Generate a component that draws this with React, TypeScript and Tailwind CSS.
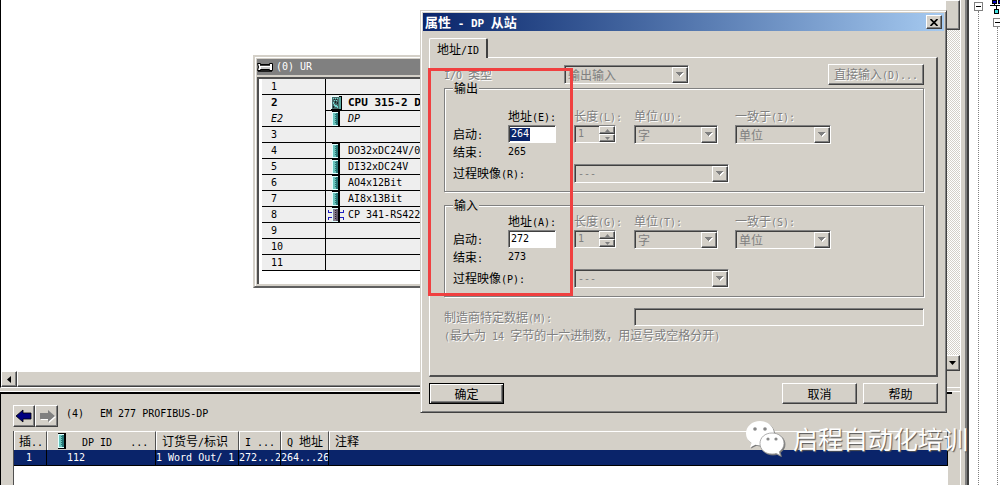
import React from "react";

const RAISED =
  "border border-t-white border-l-white border-r-[#404040] border-b-[#404040] shadow-[inset_-1px_-1px_0_#808080] bg-[#d4d0c8]";
const SUNKEN =
  "border border-t-[#808080] border-l-[#808080] border-r-white border-b-white shadow-[inset_1px_1px_0_#404040]";
const DISABLED = "text-[#808080] [text-shadow:1px_1px_0_#fff]";
const MONO = "font-['DejaVu_Sans_Mono',monospace] text-[10px]";

/* Latin runs are set in a half-width mono face beside full-width Chinese glyphs. */
function T({ children, bold = false }: { children: string; bold?: boolean }) {
  const runs = children.match(/[\x20-\x7e]+|[^\x20-\x7e]+/g) ?? [];
  const latin = bold
    ? "font-['DejaVu_Sans_Mono',monospace] text-[11px] leading-none"
    : "font-['DejaVu_Sans_Mono',monospace] text-[10px] leading-none";
  return (
    <span className="whitespace-pre">
      {runs.map((r, i) => (
        <span key={i} className={/^[\x20-\x7e]/.test(r) ? latin : "leading-none"}>{r}</span>
      ))}
    </span>
  );
}

function Select({ id, value, label, className }: { id: string; value: string; label?: string; className: string }) {
  return (
    <div className={`grid h-[19px] ${SUNKEN} ${className}`}>
      <select
        id={id}
        aria-label={label}
        disabled
        className="col-start-1 row-start-1 h-[17px] w-full appearance-none bg-transparent pl-[3px] text-xs leading-[17px] text-[#808080] opacity-100"
      >
        <option>{value}</option>
      </select>
      <span className={`pointer-events-none col-start-1 row-start-1 mt-px flex h-4 w-4 items-center justify-center justify-self-end ${RAISED}`}>
        <svg width="8" height="5" viewBox="0 0 8 5" shapeRendering="crispEdges">
          <path d="M1 1h7l-3.5 4z" fill="#fff" />
          <path d="M0 0h7l-3.5 4z" fill="#808080" />
        </svg>
      </span>
    </div>
  );
}

function Spinner({ id }: { id: string }) {
  return (
    <div className={`flex h-[18px] w-[42px] ${SUNKEN}`}>
      <input
        id={id}
        disabled
        defaultValue="1"
        className={`w-6 min-w-0 flex-1 bg-transparent pl-[3px] text-[#808080] ${MONO}`}
      />
      <div className="flex w-4 flex-col">
        <button disabled aria-label="增加" className={`flex flex-1 items-center justify-center ${RAISED}`}>
          <svg width="5" height="3" viewBox="0 0 5 3"><path d="M0 3h5l-2.5-3z" fill="#808080" /></svg>
        </button>
        <button disabled aria-label="减少" className={`flex flex-1 items-center justify-center ${RAISED}`}>
          <svg width="5" height="3" viewBox="0 0 5 3"><path d="M0 0h5l-2.5 3z" fill="#808080" /></svg>
        </button>
      </div>
    </div>
  );
}

interface GroupProps {
  id: string;
  title: string;
  keys: string[];
  start: string;
  end: string;
  selected?: boolean;
  className: string;
}

function AddressGroup({ id, title, keys, start, end, selected, className }: GroupProps) {
  return (
    <fieldset className={`min-w-0 border border-[#808080] pb-2 pl-2 shadow-[1px_1px_0_#fff,inset_1px_1px_0_#fff] ${className}`}>
      <legend className="h-2 bg-[#d4d0c8] px-px leading-[8px]">{title}</legend>
      <div className="grid auto-rows-[18px] grid-cols-[55px_66px_60px_101px_auto] items-center">
        <span />
        <label htmlFor={`${id}-start`}><T>{`地址(${keys[0]}):`}</T></label>
        <label htmlFor={`${id}-len`} className={DISABLED}><T>{`长度(${keys[1]}):`}</T></label>
        <label htmlFor={`${id}-unit`} className={DISABLED}><T>{`单位(${keys[2]}):`}</T></label>
        <label htmlFor={`${id}-cons`} className={DISABLED}><T>{`一致于(${keys[3]}):`}</T></label>

        <span><T>启动:</T></span>
        <div className={`flex h-[18px] w-12 items-center bg-white pl-px ${SUNKEN}`}>
          <input
            id={`${id}-start`}
            defaultValue={start}
            className={`h-[13px] px-px outline-none ${MONO} ${
              selected ? "w-5 bg-[#0a246a] text-white" : "w-10 bg-white text-black"
            }`}
          />
        </div>
        <Spinner id={`${id}-len`} />
        <Select id={`${id}-unit`} value="字" className="w-[84px]" />
        <Select id={`${id}-cons`} value="单位" className="w-24" />

        <span><T>结束:</T></span>
        <output className={MONO}>{end}</output>
      </div>
      <div className="mt-0.5 flex h-5 items-center">
        <label htmlFor={`${id}-image`} className="w-[121px]"><T>{`过程映像(${keys[4]}):`}</T></label>
        <Select id={`${id}-image`} value="---" className={`w-[155px] [&>select]:font-['DejaVu_Sans_Mono',monospace] [&>select]:text-[10px]`} />
      </div>
    </fieldset>
  );
}

function Module({ kind = "module" }: { kind?: string }) {
  if (kind === "cpu")
    return (
      <svg width="14" height="16" viewBox="0 0 14 16" shapeRendering="crispEdges">
        <path d="M2 1h11v14H2z" fill="#000" /><path d="M2 1h8v13H2z" fill="#e8ffff" />
        <path d="M3 2h7v12H3z" fill="#486868" /><path d="M10 2h2v12h-2z" fill="#58a8a0" />
        <path d="M4 3h1v1H4zM6 3h1v1H6zM8 3h1v1H8zM5 5h1v1H5zM7 5h1v1H7zM4 7h1v2H4zM5 9h1v2H5zM6 10h2v2H6zM8 11h1v2H8z" fill="#70d8d0" />
        <path d="M5 4h1v1H5zM7 4h1v1H7zM6 6h1v2H6zM8 7h1v2H8zM4 11h1v2H4z" fill="#102828" />
      </svg>
    );
  const cp = kind === "cp";
  return (
    <svg width="16" height="16" viewBox="0 0 16 16" shapeRendering="crispEdges">
      {cp && <path d="M0 3h1v3H0zM1 5h4v1H1zM0 10h1v3H0zM1 10h4v1H1zM15 3h1v3h-1zM11 5h4v1h-4zM15 10h1v3h-1zM11 10h4v1h-4z" fill="#2020c0" />}
      <path d="M4 0h8v16H4z" fill="#000" /><path d="M4 1h6v14H4z" fill="#e0ffff" />
      <path d="M5 2h3v12H5z" fill={cp ? "#887e90" : "#68c4bc"} />
      <path d="M8 2h2v12H8z" fill={cp ? "#605868" : "#287878"} />
      <path d="M7 3h1v1H7zM7 5h1v1H7zM7 7h1v1H7zM7 9h1v1H7zM7 11h1v1H7z" fill={cp ? "#282028" : "#287070"} />
    </svg>
  );
}

const SLOTS = [
  ["1", "", ""],
  ["2", "CPU 315-2 DP", "cpu"],
  ["E2", "DP", "module"],
  ["3", "", ""],
  ["4", "DO32xDC24V/0.5A", "module"],
  ["5", "DI32xDC24V", "module"],
  ["6", "AO4x12Bit", "module"],
  ["7", "AI8x13Bit", "module"],
  ["8", "CP 341-RS422/485", "cp"],
  ["9", "", ""],
  ["10", "", ""],
  ["11", "", ""],
];

function Rack() {
  return (
    <section className={`absolute top-[55px] left-[253px] w-[300px] border-2 border-t-[#d4d0c8] border-l-[#d4d0c8] border-r-[#404040] border-b-[#606060] bg-[#d4d0c8] p-0.5 shadow-[inset_1px_1px_0_#fff] ${MONO}`}>
      <h2 className="flex h-4 items-center gap-[3px] bg-[#808080] leading-[14px] text-white">
        <svg width="16" height="12" viewBox="0 0 16 12">
          <path d="M0.500 2.500h3v1h9v-1h3v7h-3v-1h-9v1h-3l1-3.500z" fill="#fff" stroke="#000" />
          <path d="M1 10h14M3 4h10" stroke="#000" strokeWidth="1.3" />
          <path d="M4 6h9v2H4z" fill="#c8c8c8" />
        </svg>
        <T>(0) UR</T>
      </h2>
      <div className="mt-0.5 border-t-2 border-l-2 border-[#505050] bg-white pb-[13px] pl-[3px]">
        <table className="w-full table-fixed border-separate border-spacing-0 bg-[#eee]">
          <colgroup><col className="w-16" /><col /></colgroup>
          <tbody>
            {SLOTS.map(([slot, name, kind]) => (
              <tr
                key={slot}
                className={slot === "2" ? "font-bold" : slot === "E2" ? "italic" : ""}
              >
                <td className={`h-4 border-r border-black p-0 pl-[9px] ${slot === "2" ? "" : "border-b"}`}>
                  <span className="flex h-[15px] items-center leading-[14px]"><T bold={slot === "2"}>{slot}</T></span>
                </td>
                <td className="h-4 border-b border-black p-0">
                  <span className="flex h-[15px] items-center gap-1 pl-0.5 leading-[14px]">
                    {kind && <span className="-my-px flex w-4 justify-center"><Module kind={kind} /></span>}
                    <T bold={slot === "2"}>{name}</T>
                  </span>
                </td>
              </tr>
            ))}
          </tbody>
        </table>
      </div>
    </section>
  );
}

function PropertiesDialog() {
  return (
    <div
      role="dialog"
      aria-labelledby="dlg-title"
      className="absolute top-[10px] left-[420px] w-[527px] border border-t-[#d4d0c8] border-l-[#d4d0c8] border-r-[#404040] border-b-[#404040] bg-[#d4d0c8] p-0.5 shadow-[inset_1px_1px_0_#fff,inset_-1px_-1px_0_#808080]"
    >
      <header className="flex h-[18px] items-center justify-between bg-linear-to-r from-[#0a246a] to-[#a6caf0] pr-0.5 pl-0.5 text-white">
        <h1 id="dlg-title" className="text-[13px] font-bold"><T bold>属性 - DP 从站</T></h1>
        <button aria-label="关闭" className={`flex h-[14px] w-4 items-center justify-center ${RAISED}`}>
          <svg width="8" height="7" viewBox="0 0 8 7"><path d="M.5 0l7 7M7.500 0l-7 7" stroke="#000" strokeWidth="1.7" /></svg>
        </button>
      </header>
      <div className="px-1.5 pt-[7px] pb-1.5">
        <div role="tablist" className="flex">
          <button
            role="tab"
            aria-selected="true"
            className="relative -mb-px h-5 rounded-t-xs border-t border-r-2 border-l border-t-white border-r-[#404040] border-l-white bg-[#d4d0c8] px-[7px]"
          >
            <T>地址/ID</T>
          </button>
        </div>
        <div role="tabpanel" className="border border-r-2 border-b-2 border-t-white border-l-white border-r-[#505050] border-b-[#505050] pt-1.5 pr-3 pb-[31px] pl-[14px]">
          <div className="flex h-5 items-center">
            <label htmlFor="io-type" className={`w-[120px] ${DISABLED}`}><T>I/O 类型</T></label>
            <Select id="io-type" value="输出输入" className="w-[125px]" />
            <button disabled className={`ml-auto h-[21px] w-24 ${RAISED} ${DISABLED}`}><T>直接输入(D)...</T></button>
          </div>
          <AddressGroup id="out" title="输出" keys={["E", "L", "U", "I", "R"]} start="264" end="265" selected className="[&>div:first-of-type]:pt-[15px]" />
          <AddressGroup id="in" title="输入" keys={["A", "G", "T", "S", "P"]} start="272" end="273" className="mt-[9px] [&>div:first-of-type]:pt-[3px]" />
          <div className={`mt-[11px] flex h-[18px] items-center ${DISABLED}`}>
            <label htmlFor="vendor" className="w-[190px]"><T>制造商特定数据(M):</T></label>
            <input id="vendor" disabled className={`h-[18px] min-w-0 flex-1 bg-transparent ${SUNKEN}`} />
          </div>
          <p className={`h-[18px] leading-[18px] ${DISABLED}`}><T>(最大为 14 字节的十六进制数，用逗号或空格分开)</T></p>
        </div>
        <footer className="mt-1.5 flex gap-1.5">
          <button className="mr-auto h-[21px] w-[75px] border border-black bg-[#d4d0c8] shadow-[inset_1px_1px_0_#fff,inset_-1px_-1px_0_#404040,inset_-2px_-2px_0_#808080]">确定</button>
          <button className={`h-[21px] w-[75px] ${RAISED}`}>取消</button>
          <button className={`h-[21px] w-[75px] ${RAISED}`}>帮助</button>
        </footer>
      </div>
    </div>
  );
}

function Arrow({ back = false }: { back?: boolean }) {
  return (
    <svg width="18" height="14" viewBox="0 0 18 14">
      {back ? (
        <path d="M1 7l7-6v3h8v6H8v3z" fill="#000080" stroke="#000" strokeWidth=".8" />
      ) : (
        <><path d="M18 8l-7 6v-3H3V5h8V2z" fill="#fff" /><path d="M17 7l-7-6v3H2v6h8v3z" fill="#808080" /></>
      )}
    </svg>
  );
}

function DetailPane() {
  const th = "h-[19px] border-t border-l border-r border-t-white border-l-white border-r-[#505050] bg-[#d4d0c8] p-0 font-normal overflow-hidden";
  const td = "h-4 overflow-hidden border-r border-b border-black p-0 text-white";
  return (
    <section className="mr-2 flex min-h-0 flex-1 flex-col border-t-2 border-l border-black pt-[11px] pl-3">
      <div className={`flex h-[22px] items-center ${MONO}`}>
        <button aria-label="后退" className={`flex h-[22px] w-[22px] items-center justify-center ${RAISED}`}><Arrow back /></button>
        <button aria-label="前进" className={`flex h-[22px] w-[23px] items-center justify-center ${RAISED}`}><Arrow /></button>
        <span className="ml-2 w-[34px] pb-1">(4)</span>
        <span className="pb-1">EM 277 PROFIBUS-DP</span>
      </div>
      <div className="mt-1 mr-1 flex-1 border-l border-[#505050] bg-white">
        <table className="w-full table-fixed border-separate border-spacing-0 text-left">
          <colgroup>
            <col className="w-[33px]" /><col className="w-[109px]" /><col className="w-[83px]" />
            <col className="w-[42px]" /><col className="w-12" /><col />
          </colgroup>
          <thead>
            <tr>
              <th className={`${th} pl-1`}><T>插..</T></th>
              <th className={th}>
                <span className="flex items-center pl-[6px]"><Module /><span className="ml-3"><T>DP ID   ...</T></span></span>
              </th>
              <th className={`${th} pl-[5px]`}><T>订货号/标识</T></th>
              <th className={`${th} pl-[5px]`}><T>I ...</T></th>
              <th className={`${th} pl-[5px]`}><T>Q 地址</T></th>
              <th className={`${th} pl-[5px]`}>注释</th>
            </tr>
          </thead>
          <tbody>
            <tr className={`bg-[#0a246a] leading-[15px] ${MONO}`}>
              <td className={`${td} pl-3`}><T>1</T></td>
              <td className={`${td} pl-5`}><T>112</T></td>
              <td className={td}><T>1 Word Out/ 1</T></td>
              <td className={td}><T>272...2</T></td>
              <td className={td}><T>264...26</T></td>
              <td className={td} />
            </tr>
          </tbody>
        </table>
      </div>
    </section>
  );
}

function Collapse() {
  return (
    <button aria-label="折叠" className="flex h-[9px] w-[9px] shrink-0 items-center justify-center border border-[#808080] bg-white">
      <span className="h-px w-[5px] bg-black" />
    </button>
  );
}

function Tree() {
  return (
    <nav className="flex w-[33px] shrink-0 overflow-hidden border-l-2 border-[#404040] bg-white">
      <div className="flex w-[19px] shrink-0 flex-col items-center pt-0.5">
        <Collapse />
        <span className="flex-1 border-l border-dotted border-[#808080]" />
      </div>
      <div className="flex w-[19px] shrink-0 flex-col items-center">
        <svg width="17" height="14" viewBox="0 0 17 14" className="mb-1 shrink-0" shapeRendering="crispEdges">
          <path d="M3 0h4v3H3zM9 0h4v3H9z" fill="#0000c0" stroke="#000" />
          <path d="M1 5h14v1H1zM5 3h1v3H5zM11 3h1v3h-1zM7 6h1v3H7zM12 6h1v3h-1z" fill="#000" />
          <path d="M5 9h4v4H5zM11 9h4v4h-4z" fill="#40e0e0" stroke="#000" />
        </svg>
        <Collapse />
        <span className="flex-1 border-l border-dotted border-[#808080]" />
      </div>
    </nav>
  );
}

function Watermark() {
  return (
    <div className="absolute top-[420px] left-[745px] flex items-center gap-[7px]">
      <svg width="41" height="36" viewBox="0 0 41 36" className="drop-shadow-[1px_1px_0_#777]">
        <path d="M15 1C7 1 1 6.500 1 13.500c0 4 2 7.200 5.500 9.500L5 27.500l5.500-2.700c1.500.4 3 .6 4.500.6 7.500 0 14-5 14-12S22.500 1 15 1z" fill="#fff" />
        <path d="M27 13c-7 0-12 4.500-12 10.500S20 34 27 34c1.500 0 3-.2 4.200-.6l4.300 2.300-1.200-4c3-2 4.700-5 4.700-8.200C39 17.500 34 13 27 13z" fill="#fff" stroke="#999" strokeWidth=".8" />
        <circle cx="10" cy="9" r="1.800" fill="#888" /><circle cx="20" cy="9" r="1.800" fill="#888" />
        <circle cx="23" cy="19" r="1.600" fill="#888" /><circle cx="31" cy="19" r="1.600" fill="#888" />
      </svg>
      <span className="text-[25px] leading-9 whitespace-nowrap text-white [text-shadow:1px_1px_1px_#555]">启程自动化培训</span>
    </div>
  );
}

export default function App() {
  return (
    <main className="relative flex h-screen min-h-[480px] overflow-hidden bg-[#d4d0c8] font-['Noto_Sans_CJK_SC',sans-serif] text-xs leading-4 text-black">
      <div className="flex min-w-0 flex-1 flex-col border-r border-white">
        <section className="flex h-[388px] shrink-0 flex-col border-b border-l border-b-white border-l-black">
          <div className="flex min-h-0 flex-1">
            <div className="flex-1 bg-white" />
            <div className="flex w-[15px] flex-col bg-[repeating-conic-gradient(#d4d0c8_0_25%,#fff_0_50%)] bg-[length:2px_2px]">
              <div className={`h-[30px] ${RAISED}`} />
              <button aria-label="向下滚动" className={`mt-auto flex h-4 items-center justify-center ${RAISED}`}>
                <svg width="7" height="4" viewBox="0 0 7 4"><path d="M0 0h7l-3.500 4z" /></svg>
              </button>
            </div>
          </div>
          <div className="flex h-4 pr-[15px]">
            <button aria-label="向左滚动" className={`flex w-4 items-center justify-center ${RAISED}`}>
              <svg width="4" height="7" viewBox="0 0 4 7"><path d="M4 0v7L0 3.500z" /></svg>
            </button>
            <div className={`flex-1 ${RAISED}`} />
          </div>
        </section>
        <div className="h-1 shrink-0 border-b border-white" />
        <DetailPane />
      </div>
      <div className="w-[6px] shrink-0 border-r-2 border-[#808080]" />
      <Tree />
      <Rack />
      <PropertiesDialog />
      <div className="pointer-events-none absolute top-[68px] left-[428px] h-[228px] w-[145px] border-3 border-[#f04040]" />
      <Watermark />
    </main>
  );
}
